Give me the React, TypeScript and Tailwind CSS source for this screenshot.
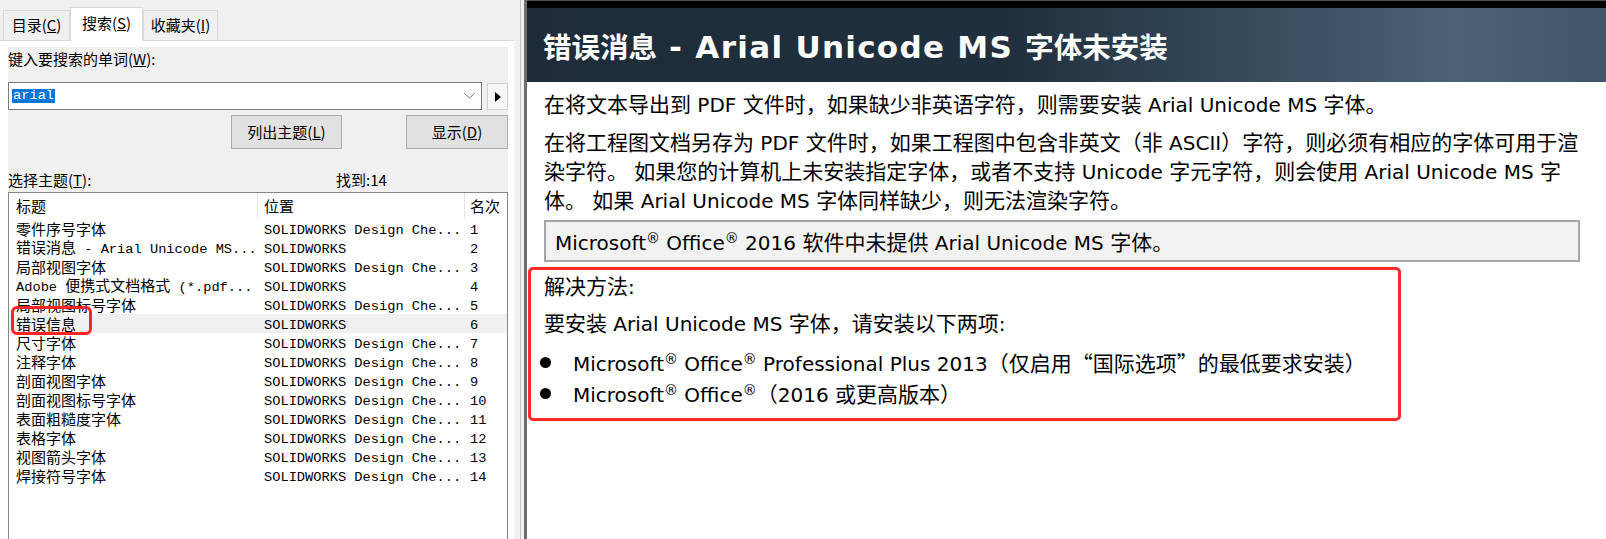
import React from 'react';

// splits text into CJK / latin runs so each gets its own font and size
const CJK_RE = /([\u2E80-\u9FFF\u3000-\u303F\uFF00-\uFFEF\u201C\u201D]+)/;

function Mix({ text, cjk, latin }: { text: string; cjk: string; latin: string }) {
  return (
    <>
      {text
        .split(CJK_RE)
        .filter(Boolean)
        .map((part, i) => (
          <span key={i} className={CJK_RE.test(part) ? cjk : latin}>
            {part}
          </span>
        ))}
    </>
  );
}

const bodyCjk = "font-['Noto_Sans_CJK_SC',sans-serif] text-[21px]";
const bodyLat = "font-['DejaVu_Sans',sans-serif] text-[20px]";
const listCjk = "font-['Noto_Sans_CJK_SC',sans-serif] text-[15px]";
const listLat = "font-['Liberation_Mono',monospace] text-[13.7px]";

const B = ({ t }: { t: string }) => <Mix text={t} cjk={bodyCjk} latin={bodyLat} />;
const L = ({ t }: { t: string }) => <Mix text={t} cjk={listCjk} latin={listLat} />;

function MsOffice() {
  return (
    <span className={bodyLat}>
      Microsoft<sup className="text-[14px]">®</sup> Office<sup className="text-[14px]">®</sup>
    </span>
  );
}

const rows: [string, string, string][] = [
  ['零件序号字体', 'SOLIDWORKS Design Che...', '1'],
  ['错误消息 - Arial Unicode MS...', 'SOLIDWORKS', '2'],
  ['局部视图字体', 'SOLIDWORKS Design Che...', '3'],
  ['Adobe 便携式文档格式 (*.pdf...', 'SOLIDWORKS', '4'],
  ['局部视图标号字体', 'SOLIDWORKS Design Che...', '5'],
  ['错误信息', 'SOLIDWORKS', '6'],
  ['尺寸字体', 'SOLIDWORKS Design Che...', '7'],
  ['注释字体', 'SOLIDWORKS Design Che...', '8'],
  ['剖面视图字体', 'SOLIDWORKS Design Che...', '9'],
  ['剖面视图标号字体', 'SOLIDWORKS Design Che...', '10'],
  ['表面粗糙度字体', 'SOLIDWORKS Design Che...', '11'],
  ['表格字体', 'SOLIDWORKS Design Che...', '12'],
  ['视图箭头字体', 'SOLIDWORKS Design Che...', '13'],
  ['焊接符号字体', 'SOLIDWORKS Design Che...', '14'],
];

export default function App() {
  return (
    <div className="flex h-[539px] w-[1606px] overflow-hidden bg-[#f0f0f0] font-['Noto_Sans_CJK_SC',sans-serif] text-black">
      {/* Left: help search pane */}
      <div className="flex w-[514px] shrink-0 flex-col">
        <div className="flex h-[40px] items-end pl-[3px] text-[15px]">
          <div className="flex h-[30px] w-[67px] items-center justify-center border border-b-0 border-[#d9d9d9] bg-[#f0f0f0]">
            目录(<u>C</u>)
          </div>
          <div className="relative top-px z-10 flex h-[34px] w-[73px] items-center justify-center border-x border-t border-[#d9d9d9] bg-white pb-[2px]">
            搜索(<u>S</u>)
          </div>
          <div className="flex h-[30px] w-[75px] items-center justify-center border border-b-0 border-[#d9d9d9] bg-[#f0f0f0]">
            收藏夹(<u>I</u>)
          </div>
        </div>

        <div className="flex min-h-0 flex-1 flex-col border-t border-[#d9d9d9] bg-white pl-[8px] pr-[6px] pt-[6px]">
          <div className="flex min-h-0 flex-1 flex-col bg-[#f0f0f0] text-[15px]">
            <div className="h-[24px] leading-[24px]">
              键入要搜索的单词(<u>W</u>):
            </div>

            <div className="mt-[11px] flex items-start gap-[5px]">
              <div className="flex h-[28px] w-[474px] items-center border border-[#7a7a7a] bg-white pl-[3px]">
                <span className="bg-[#0078d7] px-px font-['Liberation_Mono',monospace] text-[13.7px] leading-[14px] text-white">
                  arial
                </span>
                <svg className="ml-auto mr-[6px]" width="11" height="6" viewBox="0 0 11 6">
                  <polyline points="0.5,0.5 5.5,5 10.5,0.5" fill="none" stroke="#6b6b6b" strokeWidth="1" />
                </svg>
              </div>
              <div className="mt-px flex h-[27px] w-[21px] items-center justify-center border border-[#cfcfcf] bg-[#f7f7f7]">
                <svg width="6" height="10" viewBox="0 0 6 10">
                  <polygon points="0,0 6,5 0,10" fill="#000" />
                </svg>
              </div>
            </div>

            <div className="mt-[5px] flex justify-end gap-[64px]">
              <div className="flex h-[34px] w-[111px] items-center justify-center border border-[#adadad] bg-[#e1e1e1]">
                列出主题(<u>L</u>)
              </div>
              <div className="flex h-[34px] w-[102px] items-center justify-center border border-[#adadad] bg-[#e1e1e1]">
                显示(<u>D</u>)
              </div>
            </div>

            <div className="mt-[20px] flex h-[23px] items-center">
              <div className="w-[328px]">
                选择主题(<u>T</u>):
              </div>
              <div>找到:14</div>
            </div>

            <div className="flex min-h-0 flex-1 flex-col border border-b-0 border-[#828790] bg-white">
              <div className="flex h-[26px] shrink-0 items-center">
                <div className="h-full w-[249px] border-r border-[#e5e5e5] pl-[7px] leading-[26px]">标题</div>
                <div className="h-full w-[207px] border-r border-[#e5e5e5] pl-[6px] leading-[26px]">位置</div>
                <div className="h-full flex-1 pl-[5px] leading-[26px]">名次</div>
              </div>
              {rows.map(([title, loc, rank], i) => (
                <div
                  key={rank}
                  className={`relative flex h-[19px] shrink-0 items-center whitespace-nowrap leading-[19px] ${
                    i === 5 ? 'bg-[#f0f0f0]' : ''
                  }`}
                >
                  <div className="w-[249px] overflow-hidden pl-[7px]">
                    <L t={title} />
                  </div>
                  <div className="w-[207px] pl-[6px]">
                    <L t={loc} />
                  </div>
                  <div className="flex-1 pl-[5px]">
                    <L t={rank} />
                  </div>
                  {i === 5 && (
                    <div className="absolute left-[2px] top-[-8px] h-[29px] w-[81px] rounded-[6px] border-[3px] border-[#ff2424]" />
                  )}
                </div>
              ))}
            </div>
          </div>
        </div>
      </div>

      {/* splitter */}
      <div className="flex w-[13px] shrink-0">
        <div className="w-[6px]" />
        <div className="w-px bg-[#c4c4c4]" />
        <div className="w-[3px]" />
        <div className="w-[3px] bg-[#6e6e6e]" />
      </div>

      {/* Right: topic content */}
      <div className="flex min-w-0 flex-1 flex-col bg-white">
        <div className="h-[8px] shrink-0 border-t border-[#505050] bg-black" />
        <div className="flex h-[74px] shrink-0 items-center bg-[linear-gradient(90deg,#1e2c39_0%,#21303e_45%,#3b5161_72%,#4b6272_86%,#40566a_100%)] pl-[16px] pt-[5px] text-white">
          <h1 className="whitespace-nowrap">
            <Mix
              text="错误消息 - Arial Unicode MS 字体未安装"
              cjk="font-['Noto_Sans_CJK_SC',sans-serif] text-[28.5px] font-bold"
              latin="font-['DejaVu_Sans',sans-serif] text-[31px] font-bold tracking-[1.3px]"
            />
          </h1>
        </div>

        <div className="whitespace-nowrap pl-[17px] pt-[7px] leading-[28px]">
          <p>
            <B t="在将文本导出到 PDF 文件时，如果缺少非英语字符，则需要安装 Arial Unicode MS 字体。" />
          </p>
          <p className="mt-[9px] leading-[27px]">
            <B t="在将工程图文档另存为 PDF 文件时，如果工程图中包含非英文（非 ASCII）字符，则必须有相应的字体可用于渲" />
            <br />
            <B t="染字符。 如果您的计算机上未安装指定字体，或者不支持 Unicode 字元字符，则会使用 Arial Unicode MS 字" />
            <br />
            <B t="体。 如果 Arial Unicode MS 字体同样缺少，则无法渲染字符。" />
          </p>

          <div className="mt-[5px] flex h-[42px] w-[1036px] items-center border-2 border-[#a6a6a6] bg-[#f2f2f2] pl-[9px] pt-[2px]">
            <span>
              <MsOffice />
              <B t=" 2016 软件中未提供 Arial Unicode MS 字体。" />
            </span>
          </div>

          <div className="ml-[-16px] mt-[5px] w-[873px] rounded-[5px] border-[3px] border-[#ff2a2a] pb-[9px] pl-[13px] pt-px">
            <p>
              <B t="解决方法:" />
            </p>
            <p className="mt-[7px]">
              <B t="要安装 Arial Unicode MS 字体，请安装以下两项:" />
            </p>
            <ul className="mt-[9px]">
              <li className="ml-[-4px] flex h-[31px] items-center gap-[22px]">
                <span className="h-[11px] w-[11px] shrink-0 rounded-full bg-black" />
                <span>
                  <MsOffice />
                  <B t=" Professional Plus 2013（仅启用“国际选项”的最低要求安装）" />
                </span>
              </li>
              <li className="ml-[-4px] flex h-[31px] items-center gap-[22px]">
                <span className="h-[11px] w-[11px] shrink-0 rounded-full bg-black" />
                <span>
                  <MsOffice />
                  <B t="（2016 或更高版本）" />
                </span>
              </li>
            </ul>
          </div>
        </div>
      </div>
    </div>
  );
}
